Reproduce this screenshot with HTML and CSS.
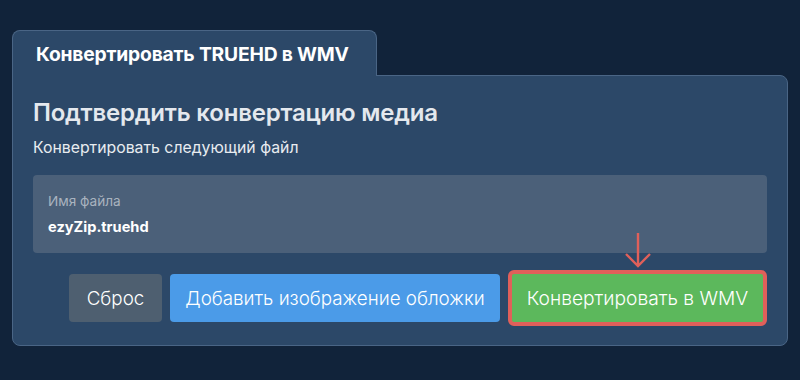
FILE: index.html
```html
<!DOCTYPE html>
<html lang="ru">
<head>
    <meta charset="UTF-8">
    <meta name="viewport" content="width=device-width, initial-scale=1.0">
    <title>Конвертировать TRUEHD в WMV</title>
    <link rel="stylesheet" href="styles.css">
</head>
<body>
    <div class="converter">
        <div class="tabs">
            <div class="tab">Конвертировать TRUEHD в WMV</div>
        </div>
        <div class="panel">
            <h2 class="panel-title">Подтвердить конвертацию медиа</h2>
            <p class="panel-subtitle">Конвертировать следующий файл</p>

            <div class="file-box">
                <div class="file-label">Имя файла</div>
                <div class="file-name">ezyZip.truehd</div>
            </div>

            <div class="actions">
                <button class="btn btn-reset">Сброс</button>
                <button class="btn btn-cover">Добавить изображение обложки</button>
                <div class="convert-wrap">
                    <svg class="hint-arrow" width="30" height="36" viewBox="0 0 30 36">
                        <path d="M15 1 V34 M3 22 L15 34 L27 22" fill="none" stroke="#e0605a" stroke-width="2.4" />
                    </svg>
                    <button class="btn btn-convert">Конвертировать в WMV</button>
                </div>
            </div>
        </div>
    </div>
</body>
</html>
```

FILE: styles.css
```css
body {
    margin: 0;
    background-color: #11233a;
    font-family: Inter, "Noto Sans", sans-serif;
    color: #fff;
}

.converter {
    padding: 30px 12px 0 12px;
}

.tabs {
    display: flex;
}

.tab {
    position: relative;
    z-index: 1;
    width: 340px;
    height: 45px;
    padding-left: 23px;
    margin-bottom: -1px;
    display: flex;
    align-items: center;
    background-color: #2c4868;
    border: 1px solid #4a6585;
    border-bottom: none;
    border-radius: 8px 8px 0 0;
    font-size: 19.3px;
    font-weight: 700;
    letter-spacing: -0.2px;
    color: #fff;
}

.panel {
    background-color: #2c4868;
    border: 1px solid #4a6585;
    border-radius: 0 8px 8px 8px;
    padding: 22px 20px 19px 20px;
}

.panel-title {
    margin: 0;
    font-size: 24px;
    font-weight: 600;
    line-height: 30px;
    color: #e4e8ee;
    letter-spacing: -0.2px;
}

.panel-subtitle {
    margin: 10px 0 0 0;
    font-size: 15.8px;
    line-height: 20px;
    color: #e8ecf0;
}

.file-box {
    margin-top: 17px;
    background-color: #4b6079;
    border-radius: 4px;
    padding: 17px 15px 16px 15px;
    height: 45px;
}

.file-label {
    font-size: 13.6px;
    line-height: 18px;
    color: #a9b3bf;
}

.file-name {
    margin-top: 7px;
    font-size: 14.6px;
    font-weight: 700;
    line-height: 20px;
    color: #fff;
}

.actions {
    margin-top: 17px;
    display: flex;
    justify-content: flex-end;
    align-items: center;
    gap: 8px;
}

.btn {
    height: 48px;
    padding: 0 10px;
    border: none;
    border-radius: 4px;
    font-family: Inter, "Noto Sans", sans-serif;
    font-size: 18.8px;
    font-weight: 300;
    color: #fff;
    cursor: pointer;
}

.btn-reset {
    width: 93px;
    background-color: #4e5f70;
}

.btn-cover {
    width: 330px;
    background-color: #4b9be8;
}

.convert-wrap {
    position: relative;
}

.btn-convert {
    display: block;
    width: 259px;
    height: 56px;
    background-color: #5cb85c;
    border: 4px solid #e0605a;
    border-radius: 6px;
    font-size: 19.2px;
}

.hint-arrow {
    position: absolute;
    left: 115px;
    top: -38px;
}
```
